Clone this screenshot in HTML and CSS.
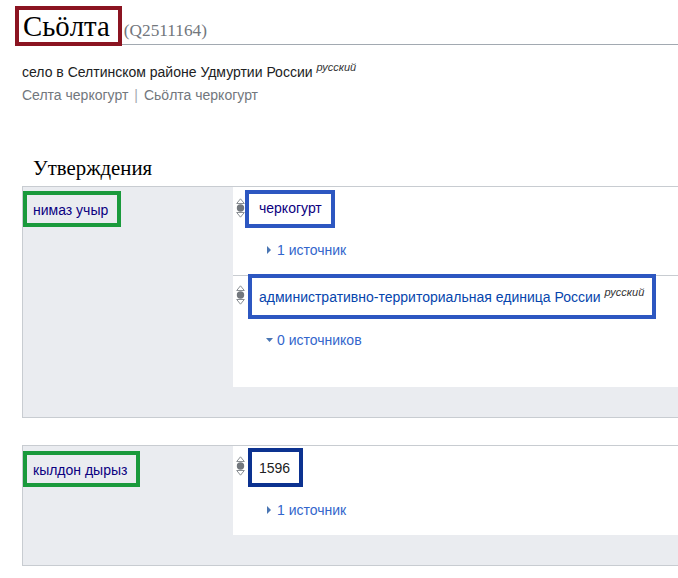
FILE: index.html
```html
<!DOCTYPE html>
<html lang="ru">
<head>
<meta charset="utf-8">
<title>Сьӧлта (Q2511164)</title>
<link rel="stylesheet" href="styles.css">
</head>
<body>
<div class="page">
  <h1 class="title"><span class="title-label">Сьӧлта</span><span class="qid">(Q2511164)</span></h1>
  <div class="desc">село в Селтинском районе Удмуртии России <sup class="lang">русский</sup></div>
  <ul class="aliases">
    <li>Селта черкогурт</li>
    <li class="sep">|</li>
    <li>Сьӧлта черкогурт</li>
  </ul>

  <h2 class="section">Утверждения</h2>

  <div class="group">
    <div class="prop"><a class="prop-label" href="#">нимаз учыр</a></div>
    <div class="stmts">
      <div class="stmt">
        <div class="value-row">
          <svg class="rank" viewBox="0 0 9 20" width="9" height="20"><polygon points="4.5,0.8 8.3,5.5 0.7,5.5" fill="none" stroke="#8a8f94" stroke-width="1"/><circle cx="4.5" cy="10" r="3.7" fill="#72777d"/><polygon points="0.7,14.5 8.3,14.5 4.5,19.2" fill="none" stroke="#8a8f94" stroke-width="1"/></svg>
          <div class="value v1"><a class="visited" href="#">черкогурт</a></div>
        </div>
        <div class="refs r1"><svg class="tri-right" viewBox="0 0 4 8" width="4" height="8"><polygon points="0,0 4,4 0,8" fill="#4a76b3"/></svg>1 источник</div>
      </div>
      <div class="stmt stmt-last">
        <div class="value-row vr2">
          <svg class="rank" viewBox="0 0 9 20" width="9" height="20"><polygon points="4.5,0.8 8.3,5.5 0.7,5.5" fill="none" stroke="#8a8f94" stroke-width="1"/><circle cx="4.5" cy="10" r="3.7" fill="#72777d"/><polygon points="0.7,14.5 8.3,14.5 4.5,19.2" fill="none" stroke="#8a8f94" stroke-width="1"/></svg>
          <div class="value v2"><a class="link" href="#">административно-территориальная единица России</a> <sup class="lang">русский</sup></div>
        </div>
        <div class="refs r2"><svg class="tri-down" viewBox="0 0 7 4" width="7" height="4"><polygon points="0,0 7,0 3.5,4" fill="#4a76b3"/></svg>0 источников</div>
      </div>
    </div>
  </div>

  <div class="group">
    <div class="prop prop2"><a class="prop-label" href="#">кылдон дырыз</a></div>
    <div class="stmts">
      <div class="stmt">
        <div class="value-row vr3">
          <svg class="rank" viewBox="0 0 9 20" width="9" height="20"><polygon points="4.5,0.8 8.3,5.5 0.7,5.5" fill="none" stroke="#8a8f94" stroke-width="1"/><circle cx="4.5" cy="10" r="3.7" fill="#72777d"/><polygon points="0.7,14.5 8.3,14.5 4.5,19.2" fill="none" stroke="#8a8f94" stroke-width="1"/></svg>
          <div class="value v3">1596</div>
        </div>
        <div class="refs r3"><svg class="tri-right" viewBox="0 0 4 8" width="4" height="8"><polygon points="0,0 4,4 0,8" fill="#4a76b3"/></svg>1 источник</div>
      </div>
    </div>
  </div>
</div>
</body>
</html>
```

FILE: styles.css
```css
body {
  margin: 0;
  font-family: "Liberation Sans", Arial, sans-serif;
  color: #202122;
  background: #fff;
}

.page {
  padding: 9px 0 0 22px;
}

.title {
  margin: 0;
  font-family: "Liberation Serif", "Times New Roman", serif;
  font-weight: normal;
  font-size: 28.8px;
  line-height: 35px;
  color: #000;
  border-bottom: 1px solid #a2a9b1;
}

.title-label {
  margin-left: -3px;
  padding: 0 8px 0 4px;
  outline: 4px solid #8b1421;
}

.qid {
  margin-left: 6px;
  font-size: 17.28px;
  line-height: 1;
  color: #72777d;
}

.desc {
  margin-top: 17px;
  font-size: 14px;
  line-height: 20px;
  color: #202122;
}

.lang {
  font-size: 11px;
  font-style: italic;
  line-height: 0;
  vertical-align: 6px;
  color: #333;
}

.aliases {
  display: flex;
  margin: 3px 0 0;
  padding: 0;
  list-style: none;
  font-size: 14px;
  line-height: 20px;
  color: #72777d;
}

.sep {
  padding: 0 6px;
  color: #a2a9b1;
}

.section {
  margin: 50px 0 5px;
  padding-left: 11px;
  font-family: "Liberation Serif", "Times New Roman", serif;
  font-weight: normal;
  font-size: 20.8px;
  line-height: 26px;
  color: #000;
}

.group {
  display: grid;
  grid-template-columns: 210px 1fr;
  background: #eaecf0;
  border: 1px solid #c8ccd1;
  border-right: none;
  padding-bottom: 30px;
}

.group + .group {
  margin-top: 27px;
}

.prop {
  padding-top: 4px;
}

.prop2 {
  padding-top: 5px;
}

.prop-label {
  display: inline-block;
  border: 4px solid #1a9a3c;
  padding: 5px 9px 3px 6px;
  font-size: 14px;
  line-height: 20px;
  color: #0b0080;
  text-decoration: none;
}

.stmts {
  background: #fff;
}

.stmt {
  padding-bottom: 15px;
}

.stmt + .stmt {
  border-top: 1px solid #c8ccd1;
}

.stmt-last {
  padding-bottom: 37px;
}

.value-row {
  display: flex;
  align-items: center;
  margin-top: 3px;
  padding-left: 3px;
}

.vr2 {
  margin-top: -2px;
}

.vr3 {
  margin-top: 2px;
}

.rank {
  flex: none;
  display: block;
  margin-bottom: 3px;
}

.value {
  border: 4px solid #2d57c1;
  font-size: 14px;
  line-height: 20px;
  color: #202122;
}

.value a {
  text-decoration: none;
}

.visited {
  color: #0b0080;
}

.link {
  color: #0645ad;
}

.v1 {
  padding: 4px 9px 6px 10px;
}

.v2 {
  margin-left: 3px;
  padding: 9px 8px 8px 7px;
}

.v3 {
  margin-left: 3px;
  padding: 6px 9px 5px 7px;
  border-color: #0c3290;
}

.refs {
  display: flex;
  align-items: center;
  padding-left: 34px;
  font-size: 14px;
  line-height: 20px;
  color: #3366cc;
}

.r1 {
  margin-top: 12px;
}

.r2 {
  margin-top: 11px;
}

.r3 {
  margin-top: 13px;
}

.tri-right {
  display: block;
  margin-right: 6px;
}

.tri-down {
  display: block;
  margin-left: -1px;
  margin-right: 4px;
}
```
